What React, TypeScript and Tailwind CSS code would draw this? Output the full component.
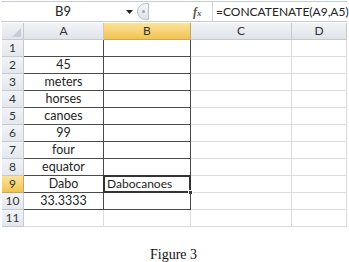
import React from "react";

const rows: [string, string][] = [
  ["", ""],
  ["45", ""],
  ["meters", ""],
  ["horses", ""],
  ["canoes", ""],
  ["99", ""],
  ["four", ""],
  ["equator", ""],
  ["Dabo", "Dabocanoes"],
  ["33.3333", ""],
  ["", ""],
];

export default function App() {
  return (
    <div className="w-[349px] h-[262px] bg-white overflow-hidden" style={{ fontFamily: "Lato, 'Open Sans', sans-serif" }}>
      {/* formula bar */}
      <div className="mt-[1px] ml-[1px] mr-[2px] h-[21px] flex items-stretch border-y border-[#c6ccd4] bg-white">
        <div className="w-[120px] shrink-0 flex items-center justify-center text-[13px] text-[#222] pl-[4px]">B9</div>
        <div className="w-[16px] shrink-0 flex items-center justify-center">
          <svg width="7" height="4" viewBox="0 0 7 4"><path d="M0 0 H7 L3.5 4 Z" fill="#222" /></svg>
        </div>
        <div className="w-[14px] shrink-0 flex items-center">
          <div className="w-[12px] h-[17px] rounded-l-full border border-[#b8bec6] bg-gradient-to-b from-[#f4f6f8] to-[#dfe3e8] flex items-center justify-center">
            <div className="w-[3px] h-[3px] bg-[#a0a6ae] rounded-full" />
          </div>
        </div>
        <div className="flex-1 min-w-0 flex items-center bg-white">
          <div className="w-[42px] shrink-0" />
          <span className="text-[12px] italic font-bold text-[#555] w-[19px] shrink-0" style={{ fontFamily: "'Liberation Serif', serif" }}>f<span className="text-[9px]">x</span></span>
          <div className="h-full w-px shrink-0 bg-[#d0d5dc]" />
          <span className="pl-[3px] text-[12px] text-[#222] whitespace-nowrap">=CONCATENATE(A9,A5)</span>
        </div>
      </div>
      {/* grid */}
      <div className="mt-[1px] ml-[2px]">
        {/* header */}
        <div className="flex h-[17px]">
          <div className="w-[22px] h-full bg-gradient-to-b from-[#f1f3f6] to-[#e0e4ea] border-r border-b border-[#c4c9d0] relative">
            <svg className="absolute right-[2px] bottom-[2px]" width="9" height="9" viewBox="0 0 9 9"><path d="M9 0 V9 H0 Z" fill="#c8ccd2" /></svg>
          </div>
          <div className="w-[80px] h-full bg-gradient-to-b from-[#f1f3f6] to-[#e0e4ea] border-r border-b border-[#c4c9d0] flex items-center justify-center text-[12px] text-[#333]">A</div>
          <div className="w-[87px] h-full bg-gradient-to-b from-[#fbe39a] to-[#f1c34e] border-r border-b border-[#c9a84a] flex items-center justify-center text-[12px] text-[#333]">B</div>
          <div className="w-[101px] h-full bg-gradient-to-b from-[#f1f3f6] to-[#e0e4ea] border-r border-b border-[#c4c9d0] flex items-center justify-center text-[12px] text-[#333]">C</div>
          <div className="w-[55px] h-full bg-gradient-to-b from-[#f1f3f6] to-[#e0e4ea] border-r border-b border-[#c4c9d0] flex items-center justify-center text-[12px] text-[#333]">D</div>
        </div>
        {rows.map(([a, b], i) => {
          const n = i + 1;
          const inTable = n <= 10;
          const sel = n === 9;
          const dark = "border-[#4a4a4a]";
          const light = "border-[#dadcdf]";
          return (
            <div key={n} className="flex h-[17px]">
              <div className={`w-[22px] h-full border-r border-b flex items-center justify-center text-[12px] text-[#333] ${sel ? "bg-gradient-to-b from-[#fbe39a] to-[#f1c34e] border-[#c9a84a]" : "bg-gradient-to-b from-[#f1f3f6] to-[#e4e8ee] border-[#c4c9d0]"}`}>{n}</div>
              <div className={`w-[80px] h-full border-b border-r ${inTable ? dark : light} flex items-center justify-center text-[12.5px] text-[#1e1e1e]`}>{a}</div>
              <div className={`w-[87px] h-full border-b border-r ${inTable ? dark : light} relative flex items-center text-[12px] text-[#1e1e1e] pl-[3px]`}>
                {b}
                {sel && (
                  <>
                    <div className="absolute -left-[1px] -top-[1px] -right-[1px] -bottom-[1px] border-2 border-[#333]" />
                    <div className="absolute -right-[3px] -bottom-[3px] w-[5px] h-[5px] bg-[#333] border border-white" />
                  </>
                )}
              </div>
              <div className="w-[101px] h-full border-b border-r border-[#dadcdf]" />
              <div className="w-[55px] h-full border-b border-r border-[#dadcdf]" />
            </div>
          );
        })}
      </div>
      <div className="mt-[17px] text-center text-[14px] text-[#111] pr-[2px]" style={{ fontFamily: "'Liberation Serif', serif" }}>Figure 3</div>
    </div>
  );
}
